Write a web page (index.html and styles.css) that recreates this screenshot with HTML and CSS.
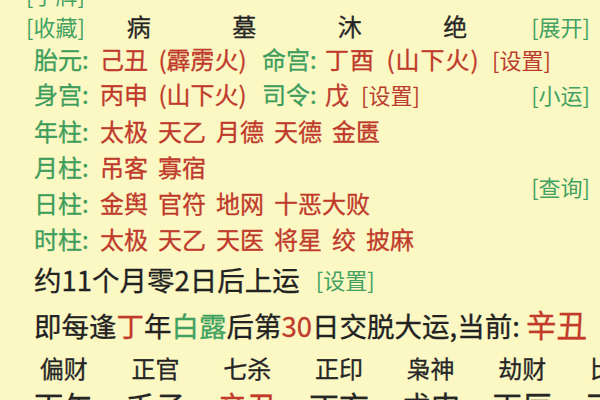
FILE: index.html
```html
<!DOCTYPE html>
<html lang="zh-CN">
<head>
<meta charset="utf-8">
<title>命盘</title>
<link rel="stylesheet" href="styles.css">
</head>
<body>
<div class="page">
  <div class="row r0"><span class="link green">[手牌]</span></div>

  <div class="row r1">
    <span class="link green">[收藏]</span>
    <span class="col">病</span>
    <span class="col">墓</span>
    <span class="col">沐</span>
    <span class="col">绝</span>
    <span class="link green end">[展开]</span>
  </div>

  <div class="row info r2">
    <span class="lbl">胎元:</span>
    <span class="val v1">己丑 (霹雳火)</span>
    <span class="lbl lbl2">命宫:</span>
    <span class="val v2a">丁酉 (山下火)</span>
    <span class="link red">[设置]</span>
  </div>

  <div class="row info r3">
    <span class="lbl">身宫:</span>
    <span class="val v1">丙申 (山下火)</span>
    <span class="lbl lbl2">司令:</span>
    <span class="val v2b">戊</span>
    <span class="link red">[设置]</span>
    <span class="link green end">[小运]</span>
  </div>

  <div class="row info r4">
    <span class="lbl">年柱:</span>
    <span class="words"><span>太极</span><span>天乙</span><span>月德</span><span>天德</span><span>金匮</span></span>
  </div>

  <div class="pair">
    <div class="row info r5">
      <span class="lbl">月柱:</span>
      <span class="words"><span>吊客</span><span>寡宿</span></span>
    </div>
    <div class="row info r6">
      <span class="lbl">日柱:</span>
      <span class="words"><span>金舆</span><span>官符</span><span>地网</span><span>十恶大败</span></span>
    </div>
    <span class="link green side">[查询]</span>
  </div>

  <div class="row info r7">
    <span class="lbl">时柱:</span>
    <span class="words"><span>太极</span><span>天乙</span><span>天医</span><span>将星</span><span>绞</span><span>披麻</span></span>
  </div>

  <div class="row big r8">
    <span>约11个月零2日后上运</span>
    <span class="link green set3">[设置]</span>
  </div>

  <div class="row big r9">
    <span>即每逢<span class="redt">丁</span>年<span class="greent">白露</span>后第<span class="redt">30</span>日交脱大运,当前: <span class="redt cur">辛丑</span></span>
  </div>

  <div class="row gods r10">
    <span>偏财</span><span>正官</span><span>七杀</span><span>正印</span><span>枭神</span><span>劫财</span><span>比肩</span>
  </div>

  <div class="row gods pillars r11">
    <span>丙午</span><span>壬子</span><span class="redt">辛丑</span><span>丁亥</span><span>戊申</span><span>丙辰</span><span>己巳</span>
  </div>
</div>
</body>
</html>
```

FILE: styles.css
```css
html, body {
  margin: 0;
  padding: 0;
}
body {
  width: 600px;
  height: 400px;
  overflow: hidden;
  background: #fbf8c4;
  color: #232323;
  font-family: "Noto Sans CJK SC", "Noto Sans", sans-serif;
  font-size: 24px;
  font-weight: 400;
  -webkit-text-stroke: 0.3px currentColor;
}
.page {
  margin-top: -22px;
}
.row {
  display: flex;
  align-items: center;
  white-space: nowrap;
  line-height: 1.2;
}
.green { color: #43a262; }
.red { color: #bb3c2c; }
.redt { color: #c23a29; }
.greent { color: #3ea160; }
.link { font-size: 22px; -webkit-text-stroke: 0; }

.r0 { height: 32px; padding-left: 26px; }

.r1 {
  height: 32px;
  display: grid;
  grid-template-columns: 60px repeat(4, 105.5px) 1fr auto;
  align-items: center;
  padding: 0 10px 0 26px;
}
.r1 .col { text-align: center; color: #262626; }
.r1 .end { grid-column: 7; }

.info { padding-left: 34px; padding-right: 10px; }
.info .lbl { color: #3f9d5c; width: 66px; flex-shrink: 0; }
.info .val { color: #bf3a2b; word-spacing: 5px; }
.info .v1 { width: 162px; flex-shrink: 0; }
.info .lbl2 { width: 63px; }
.info .v2a { width: 167px; flex-shrink: 0; letter-spacing: 1px; }
.info .v2b { width: 36px; flex-shrink: 0; }
.end { margin-left: auto; }

.r2 { height: 34px; }
.r3 { height: 37px; }
.r4, .r5, .r6, .r7 { height: 36px; }

.words {
  display: flex;
  gap: 10px;
  color: #bf3a2b;
}

.pair {
  display: grid;
  grid-template-columns: 1fr auto;
  grid-template-rows: 36px 36px;
  align-items: center;
  padding-right: 10px;
}
.pair .r5 { grid-column: 1; grid-row: 1; }
.pair .r6 { grid-column: 1; grid-row: 2; }
.pair .side { grid-column: 2; grid-row: 1 / span 2; margin-top: 2px; }

.big {
  font-size: 27.5px;
  padding-left: 34px;
  color: #222;
}
.r8 { height: 44px; }
.set3 { margin-left: 16px; }
.r9 { height: 46px; }
.cur { font-size: 30.5px; }

.gods {
  display: grid;
  grid-template-columns: repeat(7, 91.7px);
  padding-left: 18px;
  justify-items: center;
  color: #262626;
}
.r10 { height: 43px; }
.pillars {
  height: 40px;
  font-size: 30px;
  line-height: 1;
  align-items: start;
}
```
